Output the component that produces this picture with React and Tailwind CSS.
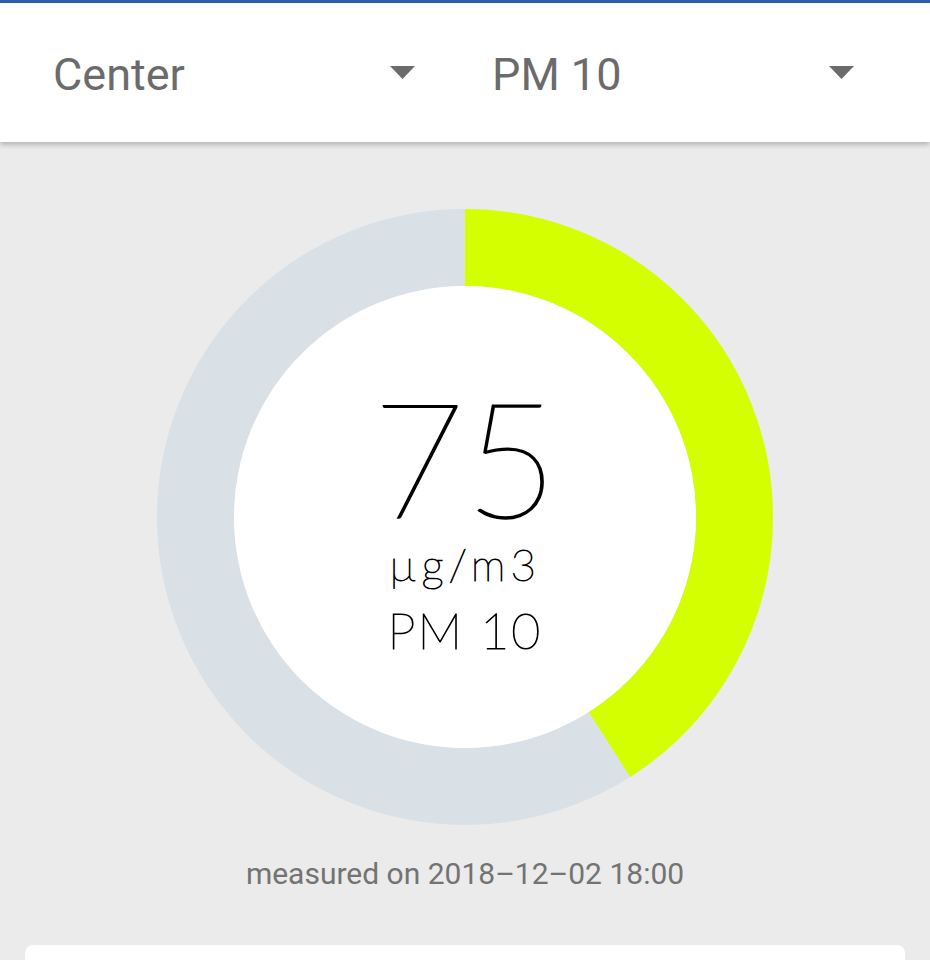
import { useState } from "react";

const R = 269.5;
const CIRC = 2 * Math.PI * R;

const Caret = () => (
    <svg width="25" height="13" viewBox="0 0 25 13" className="shrink-0">
        <polygon points="0,0 25,0 12.5,13" fill="#6b6b6b" />
    </svg>
);

const Select = ({ value }) => (
    <div className="flex items-center justify-between w-[362px]">
        <span className="text-[45px] text-[#6b6b6b] leading-none pt-[4px]" style={{ fontFamily: "Roboto, sans-serif" }}>
            {value}
        </span>
        <Caret />
    </div>
);

const App = () => {
    const [station] = useState("Center");
    const [pollutant] = useState("PM 10");
    const value = 75;
    const angle = 147.5;

    return (
        <div className="h-screen overflow-hidden bg-[#ebebeb] flex flex-col" style={{ fontFamily: "Roboto, sans-serif" }}>
            <div className="h-[3px] bg-[#2a5fb0] shrink-0"></div>

            <div className="h-[139px] bg-white shrink-0 flex items-center px-[53px] gap-[77px] shadow-[0_3px_5px_rgba(0,0,0,0.22)] relative z-10">
                <Select value={station} />
                <Select value={pollutant} />
            </div>

            <div className="relative mx-auto mt-[66px] w-[618px] h-[618px] shrink-0">
                <svg width="618" height="618" viewBox="0 0 618 618">
                    <circle cx="309" cy="309" r={R} fill="none" stroke="#d9e0e6" strokeWidth="77" />
                    <circle
                        cx="309"
                        cy="309"
                        r={R}
                        fill="none"
                        stroke="#d4ff00"
                        strokeWidth="77"
                        strokeDasharray={`${(CIRC * angle) / 360} ${CIRC}`}
                        transform="rotate(-90 309 309)"
                    />
                    <circle cx="309" cy="309" r="231" fill="#ffffff" />
                </svg>

                {/* value readout sits over the ring's white centre */}
                <div className="absolute inset-0 flex flex-col items-center pt-[186px] text-black" style={{ fontFamily: "Lato, sans-serif" }}>
                    <div className="text-[160px] leading-[125px] font-thin [-webkit-text-stroke:1.6px_black]">{value}</div>
                    <div className="text-[44px] leading-[50px] font-thin tracking-[5px] mt-[20px] [-webkit-text-stroke:0.9px_black]">µg/m3</div>
                    <div className="text-[50px] leading-[56px] font-thin tracking-[2px] mt-[13px] [-webkit-text-stroke:1px_black]">PM 10</div>
                </div>
            </div>

            <div className="mt-[30px] text-center text-[30px] leading-[36px] text-[#737373]">
                measured on 2018–12–02 18:00
            </div>

            <div className="mx-[25px] mt-[53px] flex-1 bg-white rounded-t-lg"></div>
        </div>
    );
};

export default App;
